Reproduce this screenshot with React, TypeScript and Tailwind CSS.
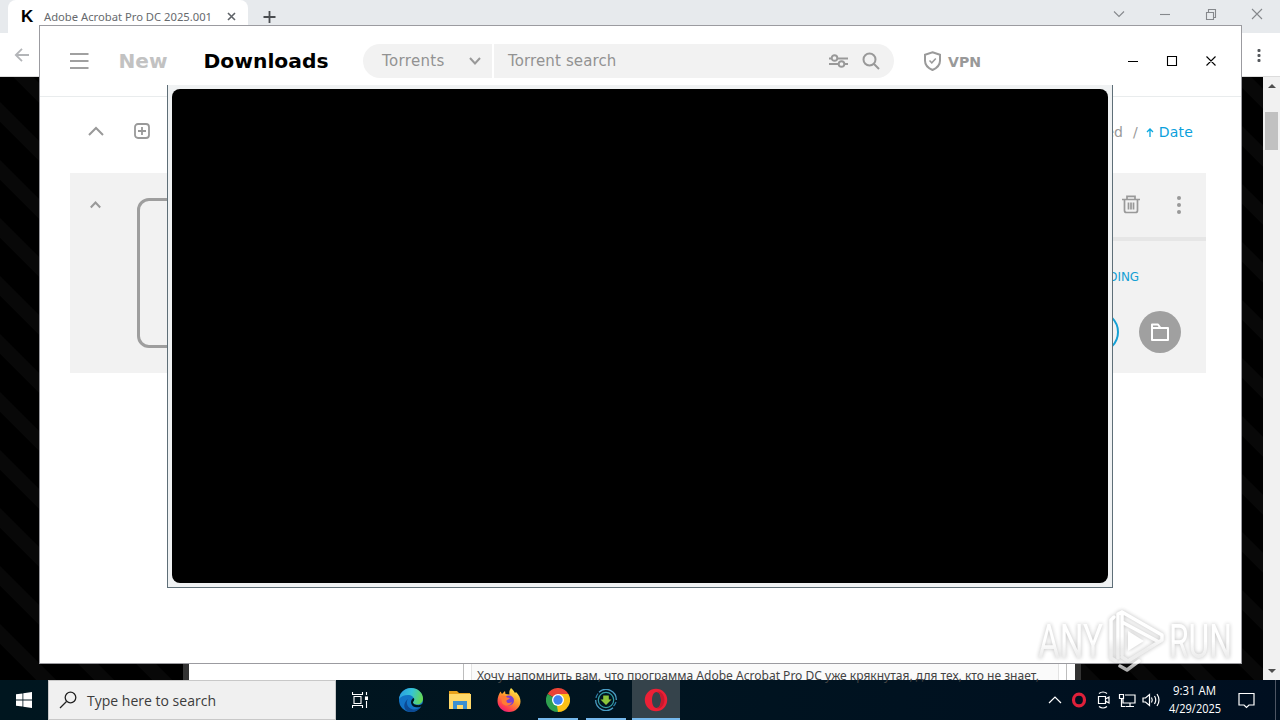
import React from 'react';

const ui = "font-['DejaVu_Sans',Verdana,sans-serif]";
const segoe = "font-['Open_Sans',sans-serif]";

const Browser: React.FC = () => (
  <div className="flex h-[680px] flex-col bg-white">
    {/* Tab strip */}
    <div className="flex h-[33px] shrink-0 bg-[#e7eaed]">
      <div className="w-[8px] rounded-br-[8px] bg-[#e7eaed]" />
      <div className="flex w-[240px] items-center rounded-t-[8px] bg-white pl-[13px]">
        <span className="w-[22px] font-['Liberation_Sans',sans-serif] text-[17px] leading-[33px] font-bold text-black">K</span>
        <svg className="h-[20px] w-[170px] overflow-visible" viewBox="0 0 170 20">
          <text x="1" y="14" fontSize="11.5" textLength="168" lengthAdjust="spacingAndGlyphs" className="fill-[#66696d] font-['Noto_Sans',sans-serif]">Adobe Acrobat Pro DC 2025.001</text>
        </svg>
        <svg className="ml-[14px] h-[9px] w-[9px]" viewBox="0 0 9 9" stroke="#5f6368" strokeWidth="1.6">
          <path d="M1 1l7 7M8 1l-7 7" />
        </svg>
      </div>
      <svg className="mt-[10px] ml-[15px] h-[13px] w-[13px]" viewBox="0 0 13 13" stroke="#4a4d51" strokeWidth="1.8">
        <path d="M6.5 1v12M.5 7h12" />
      </svg>
      <svg className="mt-[8px] mr-[17px] ml-auto h-[12px] w-[150px]" viewBox="0 0 150 12" fill="none" stroke="#85888c" strokeWidth="1.1">
        <path d="M1 3.500l5 5 5-5" />
        <path d="M47 6.500h10" />
        <path d="M93.500 4.500h7v7h-7zM95.500 4.500v-3h7v8h-2" />
        <path d="M139 1l10 10M149 1l-10 10" />
      </svg>
    </div>
    {/* Toolbar */}
    <div className="flex h-[44px] shrink-0 items-center justify-between border-b border-[#dcdcdc] bg-white pr-[19px] pl-[14px]">
      <svg className="h-[14px] w-[16px]" viewBox="0 0 16 14" fill="none" stroke="#b3b5b8" strokeWidth="1.8">
        <path d="M15 7H2M8 .8L1.800 7 8 13.200" />
      </svg>
      <svg className="h-[14px] w-[4px]" viewBox="0 0 4 14" fill="#55585c">
        <rect x=".5" y="1" width="3" height="3" rx="1" />
        <rect x=".5" y="6" width="3" height="3" rx="1" />
        <rect x=".5" y="11" width="3" height="3" rx="1" />
      </svg>
    </div>
    {/* Page */}
    <div className="flex min-h-0 flex-1">
      <div className="flex flex-1 items-end bg-[linear-gradient(45deg,#000_11%,#080808_12%,#080808_28%,#000_29%,#000_61%,#080808_62%,#080808_78%,#000_79%)] bg-[length:58px_58px] pl-[183px]">
        <div className="flex h-[40px] w-[898px] items-end border-x-6 border-[#333] bg-white">
          <div className="ml-[274px] flex h-[40px] items-end border-x border-[#bdbdbd] px-[7px]">
            <div className="flex h-[17px] w-[588px] items-start border-x border-[#e3e3e3] bg-[#fafafa] pl-[5px]">
              <svg className="h-[17px] w-[564px] shrink-0 overflow-visible" viewBox="0 0 564 17">
                <text x="0" y="17" fontSize="12.5" textLength="562" lengthAdjust="spacingAndGlyphs" className="fill-[#444] font-['Noto_Sans',sans-serif]">Хочу напомнить вам, что программа Adobe Acrobat Pro DC уже крякнутая, для тех, кто не знает,</text>
              </svg>
            </div>
          </div>
        </div>
      </div>
      <div className="flex w-[17px] flex-col items-center bg-[#f1f1f1] pt-[6px] pb-[6px]">
        <svg className="h-[5px] w-[8px]" viewBox="0 0 8 5" fill="#505050"><path d="M0 5L4 1l4 4z" /></svg>
        <div className="mt-[24px] h-[38px] w-[13px] bg-[#c1c1c1]" />
        <svg className="mt-auto h-[5px] w-[8px]" viewBox="0 0 8 5" fill="#505050"><path d="M0 0l4 4 4-4z" /></svg>
      </div>
    </div>
  </div>
);

const TorrentWindow: React.FC = () => (
  <div className={`absolute top-[25px] left-[39px] flex h-[639px] w-[1203px] flex-col border border-[#9b9ba0] bg-white ${ui}`}>
    {/* Header */}
    <div className="flex h-[71px] shrink-0 items-center border-b border-[#e9eced] pl-[30px]">
      <svg className="h-[18px] w-[19px]" viewBox="0 0 19 18" stroke="#a0a0a0" strokeWidth="2">
        <path d="M0 2h18.500M0 9h18.500M0 16h18.500" />
      </svg>
      <svg className="ml-[29px] h-[30px] w-[212px] overflow-visible" viewBox="0 0 212 30">
        <text x=".5" y="22" fontSize="20" textLength="49" lengthAdjust="spacingAndGlyphs" className="fill-[#c2c2c2] font-bold">New</text>
        <text x="85.5" y="22" fontSize="20" textLength="125" lengthAdjust="spacingAndGlyphs" className="fill-black font-bold">Downloads</text>
      </svg>
      <div className="ml-[33px] flex h-[34px] gap-[2px] text-[15px] text-[#929292]">
        <div className="flex w-[129px] items-center rounded-l-full bg-[#f2f2f2] pl-[19px]">
          <span className="w-[87px] tracking-[0.35px]">Torrents</span>
          <svg className="h-[8px] w-[12px]" viewBox="0 0 12 8" fill="none" stroke="#999" strokeWidth="2"><path d="M1 1l5 5.500L11 1" /></svg>
        </div>
        <div className="flex w-[400px] items-center rounded-r-full bg-[#f2f2f2] pl-[14px]">
          <span className="w-[320px] pt-px tracking-[0.12px]">Torrent search</span>
          <svg className="h-[16px] w-[20px]" viewBox="0 0 20 16" fill="none" stroke="#999" strokeWidth="1.900">
            <path d="M1 5.500h2.500M9.500 5.500H20M1 11h9.500M16.500 11H20" />
            <circle cx="6.500" cy="5" r="2.800" />
            <circle cx="13.500" cy="11" r="2.800" />
          </svg>
          <svg className="ml-[14px] h-[18px] w-[18px]" viewBox="0 0 18 18" fill="none" stroke="#999" strokeWidth="2">
            <circle cx="7.500" cy="7.500" r="6" /><path d="M12 12l5 5" />
          </svg>
        </div>
      </div>
      <svg className="ml-[29px] h-[20px] w-[19px]" viewBox="0 0 19 20" fill="none" stroke="#9a9a9a" strokeWidth="2">
        <path d="M9.500 1.200L17 3.700v6c0 4.500-3.500 7.500-7.500 9.300C5.500 17.200 2 14.200 2 9.700v-6z" />
        <path d="M6.500 9.500l2.300 2.300 4-4.300" strokeWidth="1.500" />
      </svg>
      <svg className="ml-[6px] h-[20px] w-[34px] overflow-visible" viewBox="0 0 34 20">
        <text x="0" y="16" fontSize="13.500" textLength="33" lengthAdjust="spacingAndGlyphs" className="fill-[#999] font-bold">VPN</text>
      </svg>
      <svg className="ml-[146px] h-[12px] w-[90px]" viewBox="0 0 90 12" fill="none" stroke="#000" strokeWidth="1.100">
        <path d="M0 6.500h10M39.500 1.500h9v9h-9zM78.500 1.500l9 9M87.500 1.500l-9 9" />
      </svg>
    </div>

    {/* Sort bar */}
    <div className="flex h-[76px] shrink-0 items-center pb-[8px] pl-[48px]">
      <svg className="h-[10px] w-[16px]" viewBox="0 0 16 10" fill="none" stroke="#999" strokeWidth="2"><path d="M1 9l7-7 7 7" /></svg>
      <svg className="ml-[30px] h-[16px] w-[16px]" viewBox="0 0 16 16" fill="none" stroke="#999" strokeWidth="1.800">
        <rect x="1" y="1" width="14" height="14" rx="3" /><path d="M8 4v8M4 8h8" />
      </svg>
      <div className="mr-[48px] ml-auto flex items-center pt-[3px] text-[14px] text-[#999]">
        <span>Added</span>
        <span className="ml-[10px]">/</span>
        <svg className="mr-[5px] ml-[8px] h-[9px] w-[8px]" viewBox="0 0 8 9" fill="none" stroke="#0aa8e0" strokeWidth="1.300"><path d="M4 9V1M1 4l3-3 3 3" /></svg>
        <span className="tracking-[0.2px] text-[#0aa0dc]">Date</span>
      </div>
    </div>

    {/* Download card */}
    <div className="ml-[30px] flex h-[200px] w-[1136px] bg-[#f2f2f2]">
      <svg className="mt-[28px] ml-[20px] h-[8px] w-[11px]" viewBox="0 0 11 8" fill="none" stroke="#999" strokeWidth="2"><path d="M.8 6.500l4.700-5 4.700 5" /></svg>
      <div className="mt-[25px] ml-[36px] h-[150px] w-[150px] rounded-[12px] border-3 border-[#9e9e9e]" />
      <div className="ml-auto flex w-[300px] flex-col">
        <div className="flex h-[68px] shrink-0 items-center justify-end border-b-4 border-[#e6e6e6] pr-[24px]">
          <svg className="h-[20px] w-[18px]" viewBox="0 0 18 20" fill="none" stroke="#999" strokeWidth="1.700">
            <path d="M0 4.500h18M5 4V1.300h8V4M2.500 4.500v11q0 2 2 2h9q2 0 2-2v-11M6.500 7.500v7M9 7.500v7M11.500 7.500v7" />
          </svg>
          <svg className="ml-[36px] h-[18px] w-[6px]" viewBox="0 0 6 18" fill="#999">
            <circle cx="3" cy="2" r="2" /><circle cx="3" cy="9" r="2" /><circle cx="3" cy="16" r="2" />
          </svg>
        </div>
        <div className="mt-[27px] flex justify-end pr-[67px] text-[12px] leading-[18px] tracking-[-0.1px] text-[#14a0d4]">DOWNLOADING</div>
        <div className="mt-[25px] flex justify-end gap-[20px] pr-[25px]">
          <div className="h-[42px] w-[42px] rounded-full border-2 border-[#14a0d4]" />
          <div className="flex h-[42px] w-[42px] items-center justify-center rounded-full bg-[#a0a0a0]">
            <svg className="h-[18px] w-[20px]" viewBox="0 0 20 18" fill="none" stroke="#fff" strokeWidth="2">
              <path d="M2 5h16v12H2zM2 5V1.500h6L10.500 5" strokeLinejoin="round" />
            </svg>
          </div>
        </div>
      </div>
    </div>
  </div>
);

const PopupWindow: React.FC = () => (
  <div className="absolute top-[85px] left-[167px] h-[503px] w-[946px] border-x border-b border-[#5f6f78] bg-[#f0f2f3] p-[4px]">
    <div className="h-[494px] rounded-[8px] bg-black" />
  </div>
);

const Watermark: React.FC = () => (
  <svg className="absolute top-[605px] left-[1030px] h-[70px] w-[220px] overflow-visible opacity-75 drop-shadow-[0_0_2px_rgba(0,0,0,0.35)]" viewBox="0 0 220 70">
    <defs>
      <linearGradient id="mark" x1="0" x2="0" y1="0" y2="1">
        <stop offset=".5" stopColor="#fff" />
        <stop offset=".75" stopColor="#e8e8e8" />
      </linearGradient>
    </defs>
    <g fill="url(#mark)" className="font-['Roboto',sans-serif]" fontSize="48">
      <text x="8" y="53" textLength="65" lengthAdjust="spacingAndGlyphs">ANY</text>
      <text x="139" y="53" textLength="63" lengthAdjust="spacingAndGlyphs">RUN</text>
    </g>
    <g fill="none" stroke="url(#mark)" strokeWidth="3.500" strokeLinejoin="round" strokeLinecap="round">
      <path d="M84 12l-3 3v38l5 3" />
      <path d="M92 50V7l-4 2v44M92 7l40 23v5L98 56l-6-4M92 17l37 20" />
      <path d="M90 61l7 4 12-9" />
    </g>
    <path d="M98 26v20l16-10z" fill="#fff" />
  </svg>
);

const Taskbar: React.FC = () => (
  <div className={`flex h-[40px] items-center bg-gradient-to-r from-[#00161f] via-[#001420] to-[#000f20] ${segoe}`}>
    <div className="flex w-[48px] justify-center">
      <svg className="h-[16px] w-[16px]" viewBox="0 0 16 16" fill="#fff">
        <path d="M0 2.300L6.500 1.400v6.200H0zM7.300 1.300L16 0v7.600H7.300zM0 8.400h6.500v6.200L0 13.700zM7.300 8.400H16V16l-8.700-1.300z" />
      </svg>
    </div>
    <div className="flex h-[40px] w-[288px] items-center border border-[#c8c8c8] bg-[#f0f0f0] pl-[10px]">
      <svg className="h-[18px] w-[18px]" viewBox="0 0 18 18" fill="none" stroke="#222" strokeWidth="1.300">
        <circle cx="11.500" cy="6.500" r="5.300" /><path d="M7.500 10.500L1 17" />
      </svg>
      <svg className="ml-[10px] h-[24px] w-[130px] overflow-visible" viewBox="0 0 130 24">
        <text x="0" y="18" fontSize="15" textLength="129" lengthAdjust="spacingAndGlyphs" className="fill-[#3c3c3c]">Type here to search</text>
      </svg>
    </div>
    <div className="flex w-[48px] justify-center">
      <svg className="h-[16px] w-[16px]" viewBox="0 0 16 16" fill="none" stroke="#fff" strokeWidth="1.100">
        <path d="M.5 0v2.500h10V0M.5 16v-2.500h10V16M2 4.500h7v7H2zM14.500 0v3M14.500 9v7" />
        <rect x="13.500" y="5" width="2" height="2.500" fill="#fff" />
      </svg>
    </div>
    <div className="flex">
      {/* Edge */}
      <div className="flex h-[40px] w-[49px] items-center justify-center pl-[5px]">
        <svg className="h-[24px] w-[24px]" viewBox="0 0 24 24">
          <defs>
            <linearGradient id="edgeTop" x1="0" x2="1" y1=".3" y2=".5"><stop stopColor="#2a9de0" /><stop offset=".5" stopColor="#35c3d8" /><stop offset="1" stopColor="#66d94f" /></linearGradient>
          </defs>
          <circle cx="12" cy="12" r="12" fill="#1273c6" />
          <path d="M0 11C1 4 6 0 12 0c7 0 12 5 12 10.500 0 4-3 6-6 6s-4-1-4-2 1-1 1-3c0-2.500-2.500-4.500-6-4.500C5 7 2 8.500 0 11z" fill="url(#edgeTop)" />
          <path d="M9 11c-3 4 0 9.500 5 10.500 3 .5 6-1 8-3-3 5-9 6.500-13 5-5-2-5-9 0-12.500z" fill="#0c4a94" />
          <path d="M14.500 10c2 1.500-.5 3.500-.5 4.500 0 2 4 3 7 2.500l3-1.500V19l-2-.5c-4 2-9.500.5-10-4 0-2 1-4 2.500-4.500z" fill="#00161f" />
        </svg>
      </div>
      {/* Explorer */}
      <div className="flex h-[40px] w-[49px] items-center justify-center pl-[5px]">
        <svg className="h-[20px] w-[22px]" viewBox="0 0 22 20">
          <path d="M0 1h8l2 2h11v5H0z" fill="#e8a21c" />
          <path d="M0 4h22v15H0z" fill="#ffd869" />
          <path d="M4 19v-8h14v8h-4v-4H8v4z" fill="#3b8fd0" />
        </svg>
      </div>
      {/* Firefox */}
      <div className="flex h-[40px] w-[49px] items-center justify-center pl-[5px]">
        <svg className="h-[24px] w-[24px]" viewBox="0 0 24 24">
          <defs>
            <linearGradient id="fox" x1=".8" x2=".2" y1="0" y2="1"><stop stopColor="#fff44f" /><stop offset=".45" stopColor="#ff9a2b" /><stop offset=".8" stopColor="#ff3c50" /><stop offset="1" stopColor="#e31587" /></linearGradient>
          </defs>
          <path d="M14 0c2 2 3 3 4 5l1-1c3 3 4.500 6 4.500 9.500C23.500 19 18.500 24 12 24S.5 19 .5 13C.5 9 2 6 3.500 3.500L5 6l3-3 .5 3 4 .5C12 4 12.500 2 14 0z" fill="url(#fox)" />
          <circle cx="12" cy="12.500" r="5" fill="#7a3fd0" />
          <path d="M4 8c3-1 5 0 6 1.500l3 .5c-1 1.500-3 1.500-3.500 2.500C9 15 12 16 15 14c-1 4-7 5-10 1z" fill="#ff7b35" />
        </svg>
      </div>
      {/* Chrome */}
      <div className="flex h-[40px] w-[49px] flex-col items-center pt-[8px] pl-[5px]">
        <svg className="h-[24px] w-[24px] shrink-0" viewBox="0 0 24 24">
          <path d="M12 12L1.600 6A12 12 0 0 1 22.400 6z" fill="#ea4335" />
          <path d="M12 12L22.400 6A12 12 0 0 1 12 24z" fill="#fbc116" />
          <path d="M12 12v12A12 12 0 0 1 1.600 6z" fill="#2fa04f" />
          <path d="M12 6h10.400l-5 9z" fill="#fbc116" /><path d="M17.200 15L12 24l-1-6z" fill="#fbc116" />
          <circle cx="12" cy="12" r="6" fill="#fff" /><circle cx="12" cy="12" r="4.700" fill="#3f83f0" />
        </svg>
        <div className="mt-auto h-[2px] w-[40px] shrink-0 bg-[#76b9ed]" />
      </div>
      {/* Torrent client */}
      <div className="flex h-[40px] w-[49px] flex-col items-center pt-[9px] pl-[3px]">
        <svg className="h-[22px] w-[22px] shrink-0" viewBox="0 0 22 22" fill="none">
          <path d="M4 3.200A10.300 10.300 0 0 1 21.300 11M18 18.800A10.300 10.300 0 0 1 .7 11" stroke="#4a9cc4" strokeWidth="1.300" />
          <path d="M21 13A10.300 10.300 0 0 1 18.500 17M1 9A10.300 10.300 0 0 1 3 4.500" stroke="#2f7fa8" strokeWidth="1.200" />
          <circle cx="11" cy="11" r="7.700" stroke="#35a0a8" strokeWidth="1.200" />
          <path d="M8.200 6.500h5.600v4h2.700L11 16l-5.500-5.500h2.700z" fill="#8cc63a" />
        </svg>
        <div className="mt-auto h-[2px] w-[40px] shrink-0 bg-[#76b9ed]" />
      </div>
      {/* Opera */}
      <div className="ml-[3px] flex h-[40px] w-[48px] flex-col items-center bg-[#35434b] pt-[8px]">
        <svg className="h-[24px] w-[24px] shrink-0" viewBox="0 0 24 24">
          <path fillRule="evenodd" d="M12 .8a11.200 11.200 0 1 0 0 22.400 11.200 11.200 0 0 0 0-22.400zM12.500 4c3 0 4.500 4 4.500 8s-1.500 8-4.500 8S8 16 8 12s1.500-8 4.500-8z" fill="#ec2036" />
          <path d="M12.500 4c3-1.500 5 .5 6.500 2.500 2 3.500 2 7.500 0 11-1.500 2-3.500 4-6.500 2.500 3 0 4.500-4 4.500-8s-1.500-8-4.500-8z" fill="#c9182d" />
        </svg>
        <div className="mt-auto h-[2px] w-full shrink-0 bg-[#76b9ed]" />
      </div>
    </div>
    {/* Tray */}
    <div className="ml-auto flex h-[40px] items-center">
      <svg className="h-[20px] w-[116px]" viewBox="0 0 116 20" fill="none" stroke="#fff" strokeWidth="1.200">
        <path d="M2 13l6-6 6 6" />
        <ellipse cx="32" cy="10" rx="5.500" ry="5.800" stroke="#e0203a" strokeWidth="3.200" />
        <path d="M51.500 6.500h7v7h-7zM58.500 9l3.500-2v6l-3.500-2M52 3.500q4-3 8 0M52 16.500q4 3 8 0" />
        <path d="M78 5h10v8H76V9M79 16.500h8M83 13v3.500M72.500 4.500h4v4h-4zM74.500 8.500v8h4" />
        <path d="M96 8h2.500l4-3.500v11l-4-3.500H96zM104.500 7.500q1.500 2.500 0 5M107.500 6q2.500 4 0 8M110 4q4 6 0 12" />
      </svg>
      <svg className="ml-[5px] h-[40px] w-[58px]" viewBox="0 0 58 40">
        <g fill="#fff" fontSize="12">
          <text x="5" y="15" textLength="43" lengthAdjust="spacingAndGlyphs">9:31 AM</text>
          <text x="1" y="33" textLength="52" lengthAdjust="spacingAndGlyphs">4/29/2025</text>
        </g>
      </svg>
      <svg className="ml-[12px] h-[17px] w-[17px]" viewBox="0 0 17 17" fill="none" stroke="#fff" strokeWidth="1.200">
        <path d="M1 1.500h15v11.500h-5L8.500 15.500 6 13H1z" />
      </svg>
      <div className="ml-[20px] h-[40px] w-[5px] border-l border-[#4d5563]" />
    </div>
  </div>
);

const App: React.FC = () => {
  return (
    <div className="relative h-[720px] w-[1280px] overflow-hidden bg-black">
      <Browser />
      <Taskbar />
      <TorrentWindow />
      <PopupWindow />
      <Watermark />
    </div>
  );
};

export default App;
